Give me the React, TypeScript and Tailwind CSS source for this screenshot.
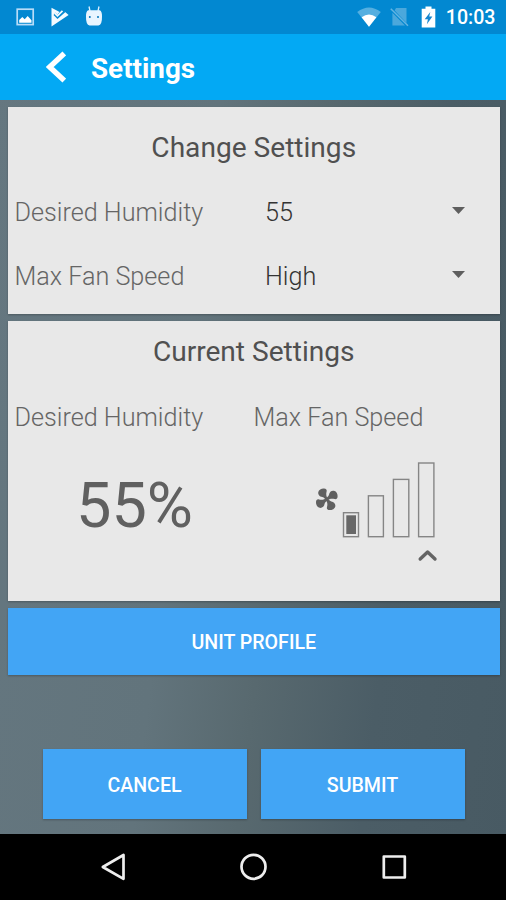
import type { ReactNode } from "react";

function StatusBar() {
  return (
    <header className="flex h-[34px] shrink-0 items-center bg-[#0288d1] text-white">
      <svg className="ml-[16px] h-[18px] w-[19px]" viewBox="0 0 19 18">
        <rect x="1.2" y="1.2" width="16" height="15.4" fill="none" stroke="#b7dcf8" strokeWidth="1.7" />
        <path d="M3.2 14.7V12L6.3 9l2.4 2.2 3-3.2 3.8 4.2v2.5z" fill="#fff" />
      </svg>
      <svg className="ml-[16px] h-[20px] w-[19px]" viewBox="0 0 19 20">
        <path d="M.5 .7 8.6 4.9 6.3 7.4 4.3 5.4 2.7 7 6.5 10.9 13.6 4.6 17.6 8 .5 19.5z" fill="#f3faff" />
        <path d="M3 7.6 6.5 11.2 14 4.4" fill="none" stroke="#0288d1" strokeWidth="1.3" />
        <path d="M3.6 5.8 6.5 8.8 11.5 3.8" fill="none" stroke="#f3faff" strokeWidth="1.8" />
      </svg>
      <svg className="mb-[2px] ml-[14px] h-[22px] w-[20px]" viewBox="0 0 20 22">
        <path d="M5 1.5 6 6M15 1.5 14 6" stroke="#dff1ff" strokeWidth="1.3" />
        <path d="M4.2 5.3h11.6q2.4 1.2 2.2 6.2.2 8.3-3.6 9.1H5.6Q1.8 19.8 2 11.5 1.8 6.5 4.2 5.3z" fill="#e8f5ff" />
        <circle cx="5.8" cy="12" r="1" fill="#0275ba" />
        <circle cx="14" cy="12" r="1" fill="#0275ba" />
      </svg>
      <div className="ml-auto flex items-center">
        <svg className="h-[20px] w-[24px]" viewBox="0 0 24 20">
          <path d="M.2 5Q12-4.2 23.8 5L12 19.8z" fill="#55afe0" />
          <path d="M4.6 10.2Q12 5 19.4 10.2L12 19.8z" fill="#fff" />
        </svg>
        <svg className="ml-[9px] h-[20px] w-[19px]" viewBox="0 0 19 20">
          <path d="M6 1h10.5v15L4.6 3.4z M2.4 5.8 15 18.5H2.4z" fill="#4ba8dc" />
          <path d="M.8 1.8 18 18.8" stroke="#63b4e2" strokeWidth="1.5" />
        </svg>
        <svg className="ml-[12px] h-[22px] w-[15px]" viewBox="0 0 15 22">
          <path d="M4.5.5h6v2.2h3.8v18.8H.7V2.7h3.8z" fill="#fff" />
          <path d="M9.3 6 3.7 13.2h3.2l-1 5.1 5.5-7.7H8.2z" fill="#1686cf" />
        </svg>
        <span className="mr-[10.5px] ml-[9.5px] translate-y-px text-[19.6px] leading-none font-medium">10:03</span>
      </div>
    </header>
  );
}

function Card({ title, className, children }: { title: string; className: string; children: ReactNode }) {
  return (
    <section className={"ml-[7.5px] mr-[6px] shrink-0 bg-[#e8e8e8] shadow-[0_1px_2px_rgba(0,0,0,0.25)] " + className}>
      <h2 className="text-center text-[28.1px] leading-[34px] font-normal text-[#505050]">{title}</h2>
      {children}
    </section>
  );
}

function SelectRow({ label, value }: { label: string; value: string }) {
  return (
    <div className="flex h-16 items-center pl-[7px] text-[25.2px] font-light">
      <span className="w-[250.5px] pt-[2px] text-[#656565]">{label}</span>
      <span className="pt-[2px] text-[#333]">{value}</span>
      <svg className="mr-[35px] mb-[2px] ml-auto h-[7px] w-[13px]" viewBox="0 0 13 7">
        <path d="M0 0h13L6.5 7z" fill="#5e5e5e" />
      </svg>
    </div>
  );
}

function FanGauge() {
  return (
    <svg className="ml-[60px] h-[108px] w-[124px]" viewBox="314 460 124 108">
      <g fill="#606060" transform="translate(326.8 499.3)">
        {[0, 90, 180, 270].map((angle) => (
          <path
            key={angle}
            transform={"rotate(" + angle + ")"}
            d="M0 1.2C-1.8.5-2.4-1.8-4.5-2.2-7.3-2.5-9-4.8-8.5-7.2-7.9-9.8-5.2-11-2.8-10.8-.6-10.7.3-9.4-.2-7.8-.9-5.6-.7-2.2 1.2-.6z"
          />
        ))}
      </g>
      <g fill="none" stroke="#858585" strokeWidth="1.4">
        <rect x="343.5" y="512.7" width="15" height="24" />
        <rect x="368.4" y="495.8" width="15" height="40.9" />
        <rect x="393.4" y="479.4" width="15.4" height="57.3" />
        <rect x="418.6" y="463" width="15.3" height="73.7" />
      </g>
      <path d="M346.3 515.3h9.7V534h-9.7z" fill="#686868" />
      <path d="m420.2 559 7.4-7 7.4 7" fill="none" stroke="#646464" strokeWidth="3.4" strokeLinecap="round" strokeLinejoin="round" />
    </svg>
  );
}

function Button({ label, className }: { label: string; className: string }) {
  return (
    <button
      className={
        "shrink-0 bg-[#42a5f5] text-[19.6px] font-medium text-white shadow-[0_1px_2px_rgba(0,0,0,0.25)] " + className
      }
    >
      {label}
    </button>
  );
}

export default function App() {
  return (
    <div className="flex h-[900px] w-[506px] flex-col overflow-hidden bg-[linear-gradient(97deg,#657780_0%,#62747c_38%,#58696f_55%,#4b5d66_75%,#485a63_100%)] font-[Roboto,sans-serif]">
      <StatusBar />
      <div className="flex h-[66px] shrink-0 items-center bg-[#03a9f4] text-white">
        <svg className="ml-[46px] h-[32px] w-[20px]" viewBox="0 0 20 32">
          <path d="M18.3 2.5 3.7 16l14.6 13.5" fill="none" stroke="#fff" strokeWidth="5.4" />
        </svg>
        <h1 className="ml-[25px] pt-[3px] text-[27.8px] leading-none font-bold">Settings</h1>
      </div>
      <Card title="Change Settings" className="mt-[6.5px] h-[207.5px] pt-[24px]">
        <div className="mt-[15px]">
          <SelectRow label="Desired Humidity" value="55" />
          <SelectRow label="Max Fan Speed" value="High" />
        </div>
      </Card>
      <Card title="Current Settings" className="mt-[7px] h-[280px] pt-[14px]">
        <div className="mt-[32px] grid grid-cols-[239px_1fr] pl-[7px] text-[25.2px] leading-[34px] font-light text-[#656565]">
          <span>Desired Humidity</span>
          <span>Max Fan Speed</span>
        </div>
        <div className="mt-[25px] grid grid-cols-[246.5px_1fr]">
          <div className="pl-[68.5px] text-[63px] leading-[92px] text-[#606060]">55%</div>
          <FanGauge />
        </div>
      </Card>
      <Button label="UNIT PROFILE" className="mr-[6px] ml-[7.5px] mt-[6.5px] h-[67.5px] pt-[2px]" />
      <div className="mt-[73.5px] flex gap-[14px] pl-[42.5px]">
        <Button label="CANCEL" className="h-[70.5px] w-[204px] pt-[3px]" />
        <Button label="SUBMIT" className="h-[70.5px] w-[204px] pt-[3px]" />
      </div>
      <nav className="mt-auto h-[66.5px] shrink-0 bg-black">
        <svg className="h-[66px] w-[506px]" viewBox="0 834 506 66" fill="none" stroke="#eee" strokeWidth="2.7" strokeLinejoin="round">
          <path d="M102.8 867 123.5 855V878.8z" />
          <circle cx="253.5" cy="866.8" r="12" />
          <rect x="383.8" y="856.5" width="21" height="21" />
        </svg>
      </nav>
    </div>
  );
}
